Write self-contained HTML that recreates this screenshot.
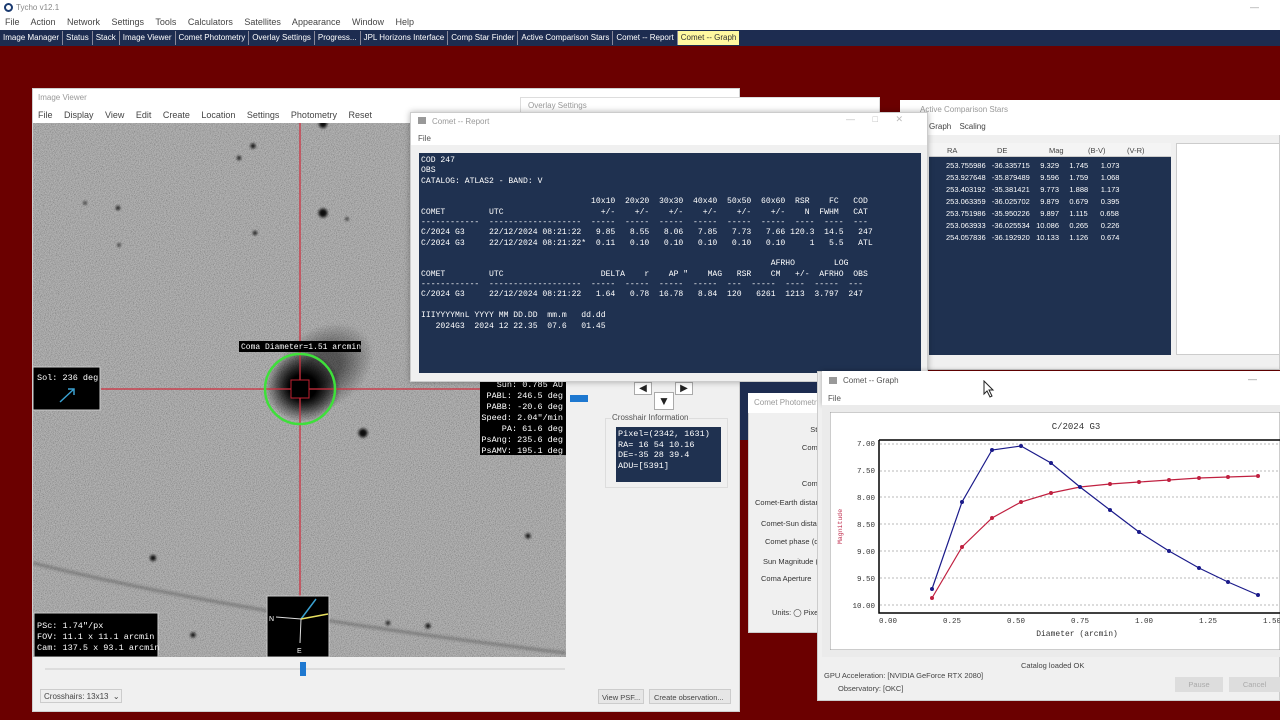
<!DOCTYPE html>
<html><head><meta charset="utf-8"><style>
*{margin:0;padding:0;box-sizing:border-box}
body{width:1280px;height:720px;overflow:hidden;background:#6b0000;font-family:"Liberation Sans",sans-serif;font-size:9px;color:#222;position:relative}
.a{position:absolute}
.mono{font-family:"Liberation Mono",monospace}
pre{font-family:"Liberation Mono",monospace;white-space:pre}
.btn{white-space:nowrap}
</style></head><body>
<!-- top bars -->
<div class="a" style="left:0;top:0;width:1280px;height:30px;background:#fff"></div>
<div class="a" style="left:4px;top:3px;width:9px;height:9px;border:2px solid #1a3a70;border-radius:50%"></div>
<div class="a" style="left:16px;top:3px;color:#888;font-size:8px">Tycho v12.1</div>
<div class="a" style="left:1250px;top:2px;color:#999;font-size:9px">—</div>
<div class="a" style="left:5px;top:17px;font-size:9px;color:#444;word-spacing:9px">File Action Network Settings Tools Calculators Satellites Appearance Window Help</div>
<div class="a" style="left:0;top:30px;width:1280px;height:16px;background:#1d2c50"></div>
<div class="a" style="left:0;top:31px;height:14px;display:flex;font-size:8px;color:#fff;line-height:14px;white-space:nowrap">
<span style="padding:0 3px;border-right:1px solid #889">Image Manager</span><span style="padding:0 3px;border-right:1px solid #889">Status</span><span style="padding:0 3px;border-right:1px solid #889">Stack</span><span style="padding:0 3px;border-right:1px solid #889">Image Viewer</span><span style="padding:0 3px;border-right:1px solid #889">Comet Photometry</span><span style="padding:0 3px;border-right:1px solid #889">Overlay Settings</span><span style="padding:0 3px;border-right:1px solid #889">Progress...</span><span style="padding:0 3px;border-right:1px solid #889">JPL Horizons Interface</span><span style="padding:0 3px;border-right:1px solid #889">Comp Star Finder</span><span style="padding:0 3px;border-right:1px solid #889">Active Comparison Stars</span><span style="padding:0 3px;border-right:1px solid #889">Comet -- Report</span><span style="padding:0 3px;background:#fff9a0;color:#333">Comet -- Graph</span></div>

<!-- Image viewer window -->
<div class="a" style="left:32px;top:88px;width:708px;height:624px;background:#f0f0f0;border:1px solid #cfcfcf"></div>
<div class="a" style="left:33px;top:89px;width:706px;height:34px;background:#fff"></div>
<div class="a" style="left:38px;top:93px;color:#999;font-size:8px">Image Viewer</div>
<div class="a" style="left:38px;top:110px;color:#444;font-size:9px;word-spacing:9px">File Display View Edit Create Location Settings Photometry Reset</div>
<svg class="a" style="left:33px;top:123px" width="533" height="534">
<defs><filter id="n" x="0" y="0" width="100%" height="100%"><feTurbulence type="fractalNoise" baseFrequency="1.2" numOctaves="1" seed="3"/><feColorMatrix values="1.6 0 0 0 -0.3  1.6 0 0 0 -0.3  1.6 0 0 0 -0.3  0 0 0 0 1"/></filter>
<filter id="b"><feGaussianBlur stdDeviation="1.2"/></filter>
<radialGradient id="cg"><stop offset="0.35" stop-color="#000"/><stop offset="1" stop-color="#000" stop-opacity="0"/></radialGradient></defs>
<rect width="533" height="534" fill="#9c9c9c"/>
<rect width="533" height="534" filter="url(#n)" opacity="0.35"/>
<path d="M0 440 Q200 490 533 530" stroke="#555" stroke-width="3" fill="none" opacity="0.5" filter="url(#b)"/>
<g fill="#111" filter="url(#b)"><circle cx="290" cy="90" r="4.5"/><circle cx="330" cy="310" r="4.5"/><circle cx="120" cy="435" r="3"/><circle cx="155" cy="574" r="3"/><circle cx="154" cy="545" r="2.5"/><circle cx="395" cy="503" r="2.5"/><circle cx="220" cy="23" r="2.5"/><circle cx="206" cy="35" r="2"/><circle cx="222" cy="110" r="2"/><circle cx="85" cy="85" r="2"/><circle cx="290" cy="1" r="4"/><circle cx="495" cy="413" r="2.5"/><circle cx="160" cy="512" r="2.5"/><circle cx="355" cy="500" r="2"/><circle cx="52" cy="80" r="1.5"/><circle cx="86" cy="122" r="1.5"/><circle cx="314" cy="96" r="1.5"/></g>
<ellipse cx="290" cy="245" rx="55" ry="40" fill="url(#cg)" opacity="0.5" transform="rotate(-35 290 245)"/>
<ellipse cx="270" cy="264" rx="38" ry="35" fill="url(#cg)"/>
<line x1="267" y1="0" x2="267" y2="534" stroke="#d03040" stroke-width="1.5" opacity="0.85"/>
<line x1="68" y1="266" x2="533" y2="266" stroke="#d03040" stroke-width="1.5" opacity="0.85"/>
<rect x="258" y="257" width="18" height="18" fill="#000" stroke="#c02030"/>
<circle cx="267" cy="266" r="35" fill="none" stroke="#3ee03a" stroke-width="2.5"/>
<rect x="206" y="218" width="122" height="11" fill="#000"/>
<text x="208" y="226" fill="#fff" font-family="Liberation Mono" font-size="8">Coma Diameter=1.51 arcmin</text>
<rect x="0" y="244" width="67" height="43" fill="#000" stroke="#ccc"/>
<text x="4" y="257" fill="#fff" font-family="Liberation Mono" font-size="8.5">Sol: 236 deg</text>
<line x1="27" y1="279" x2="41" y2="266" stroke="#3aa0d0" stroke-width="1.5"/><path d="M35 266 L41 266 L41 272" stroke="#3aa0d0" fill="none" stroke-width="1.5"/>
<rect x="447" y="257" width="86" height="75" fill="#000"/>
<text font-family="Liberation Mono" font-size="8.5" fill="#fff" text-anchor="end"><tspan x="530" y="264">Sun: 0.785 AU</tspan><tspan x="530" y="275">PABL: 246.5 deg</tspan><tspan x="530" y="286">PABB: -20.6 deg</tspan><tspan x="530" y="297">Speed: 2.04"/min</tspan><tspan x="530" y="308">PA: 61.6 deg</tspan><tspan x="530" y="319">PsAng: 235.6 deg</tspan><tspan x="530" y="330">PsAMV: 195.1 deg</tspan></text>
<rect x="1" y="490" width="124" height="44" fill="#000" stroke="#ccc"/>
<text font-family="Liberation Mono" font-size="8.5" fill="#fff"><tspan x="4" y="505">PSc: 1.74"/px</tspan><tspan x="4" y="516">FOV: 11.1 x 11.1 arcmin</tspan><tspan x="4" y="527">Cam: 137.5 x 93.1 arcmin</tspan></text>
<rect x="234" y="473" width="62" height="61" fill="#000" stroke="#ccc"/>
<line x1="268" y1="496" x2="283" y2="476" stroke="#3aa0d0" stroke-width="1.5"/>
<line x1="268" y1="496" x2="295" y2="491" stroke="#e8e060" stroke-width="1.5"/>
<line x1="268" y1="496" x2="243" y2="494" stroke="#ddd" stroke-width="1"/>
<line x1="268" y1="496" x2="267" y2="520" stroke="#ddd" stroke-width="1"/>
<text x="236" y="498" fill="#fff" font-size="7" font-family="Liberation Sans">N</text>
<text x="264" y="530" fill="#fff" font-size="7" font-family="Liberation Sans">E</text>
</svg>
<div class="a" style="left:45px;top:668px;width:520px;height:2px;background:#ddd"></div>
<div class="a" style="left:300px;top:662px;width:6px;height:14px;background:#1e78d0"></div>
<div class="a btn" style="left:40px;top:689px;width:82px;height:14px;border:1px solid #ccc;background:#eee;font-size:8px;color:#444;padding:2px 3px">Crosshairs: 13x13 &nbsp;⌄</div>
<div class="a btn" style="left:598px;top:689px;width:46px;height:15px;border:1px solid #ccc;background:#e6e6e6;font-size:7.5px;color:#444;padding:3px 3px">View PSF...</div>
<div class="a btn" style="left:649px;top:689px;width:82px;height:15px;border:1px solid #ccc;background:#e6e6e6;font-size:7.5px;color:#444;padding:3px 4px">Create observation...</div>

<!-- crosshair panel area -->
<div class="a" style="left:570px;top:395px;width:18px;height:7px;background:#1e78d0"></div>
<div class="a" style="left:634px;top:382px;width:18px;height:13px;background:#fff;border:1px solid #aaa;text-align:center;font-size:10px;line-height:11px">◀</div>
<div class="a" style="left:675px;top:382px;width:18px;height:13px;background:#fff;border:1px solid #aaa;text-align:center;font-size:10px;line-height:11px">▶</div>
<div class="a" style="left:654px;top:392px;width:20px;height:18px;background:#fff;border:1px solid #aaa;text-align:center;font-size:12px;line-height:16px">▼</div>
<div class="a" style="left:605px;top:418px;width:123px;height:70px;border:1px solid #ddd"></div>
<div class="a" style="left:611px;top:413px;font-size:8px;color:#555;background:#f0f0f0;padding:0 1px">Crosshair Information</div>
<div class="a mono" style="left:616px;top:427px;width:105px;height:55px;background:#1f3150;color:#fff;font-size:8.5px;line-height:10.5px;padding:2px 2px;white-space:pre">Pixel=(2342, 1631)
RA= 16 54 10.16
DE=-35 28 39.4
ADU=[5391]</div>

<!-- Overlay settings (behind) -->
<div class="a" style="left:520px;top:97px;width:360px;height:18px;background:#fff;border:1px solid #ddd"></div>
<div class="a" style="left:528px;top:101px;color:#999;font-size:8px">Overlay Settings</div>

<!-- Active comparison stars -->
<div class="a" style="left:900px;top:100px;width:380px;height:270px;background:#f0f0f0;border:1px solid #ccc"></div>
<div class="a" style="left:900px;top:100px;width:380px;height:35px;background:#fff"></div>
<div class="a" style="left:920px;top:105px;color:#999;font-size:8px">Active Comparison Stars</div>
<div class="a" style="left:929px;top:122px;color:#444;font-size:8px;word-spacing:6px">Graph Scaling</div>
<div class="a" style="left:929px;top:143px;width:242px;height:212px;background:#1f3150"></div>
<div class="a" style="left:929px;top:143px;width:242px;height:14px;background:#f4f4f4;border-bottom:1px solid #ccc;font-size:7.5px;color:#444"><span class="a" style="left:18px;top:3px">RA</span><span class="a" style="left:68px;top:3px">DE</span><span class="a" style="left:120px;top:3px">Mag</span><span class="a" style="left:159px;top:3px">(B-V)</span><span class="a" style="left:198px;top:3px">(V-R)</span></div>
<pre class="a" style="left:946px;top:160px;color:#fff;font-family:'Liberation Sans',sans-serif;font-size:7.5px;line-height:12px">253.755986   -36.335715     9.329     1.745      1.073
253.927648   -35.879489     9.596     1.759      1.068
253.403192   -35.381421     9.773     1.888      1.173
253.063359   -36.025702     9.879     0.679      0.395
253.751986   -35.950226     9.897     1.115      0.658
253.063933   -36.025534   10.086     0.265      0.226
254.057836   -36.192920   10.133     1.126      0.674</pre>
<div class="a" style="left:1176px;top:143px;width:104px;height:212px;background:#fff;border:1px solid #ccc"></div>

<!-- Comet report -->
<div class="a" style="left:410px;top:112px;width:518px;height:270px;background:#f0f0f0;border:1px solid #ccc;box-shadow:0 0 6px rgba(0,0,0,.3)"></div>
<div class="a" style="left:411px;top:113px;width:516px;height:32px;background:#fff"></div>
<div class="a" style="left:418px;top:117px;width:8px;height:7px;background:#999"></div>
<div class="a" style="left:432px;top:117px;color:#999;font-size:8px">Comet -- Report</div>
<div class="a" style="left:846px;top:114px;color:#bbb;font-size:9px">—&nbsp;&nbsp;&nbsp;&nbsp;&nbsp;&nbsp;&nbsp;□&nbsp;&nbsp;&nbsp;&nbsp;&nbsp;&nbsp;&nbsp;✕</div>
<div class="a" style="left:418px;top:134px;color:#555;font-size:8px">File</div>
<div class="a" style="left:419px;top:153px;width:502px;height:220px;background:#1f3150"></div>
<pre class="a" style="left:421px;top:156px;color:#fff;font-size:8.1px;line-height:10.35px">COD 247
OBS
CATALOG: ATLAS2 - BAND: V

                                   10x10  20x20  30x30  40x40  50x50  60x60  RSR    FC   COD
COMET         UTC                    +/-    +/-    +/-    +/-    +/-    +/-    N  FWHM   CAT
------------  -------------------  -----  -----  -----  -----  -----  -----  ----  ----  ---
C/2024 G3     22/12/2024 08:21:22   9.85   8.55   8.06   7.85   7.73   7.66 120.3  14.5   247
C/2024 G3     22/12/2024 08:21:22*  0.11   0.10   0.10   0.10   0.10   0.10     1   5.5   ATL

                                                                        AFRHO        LOG
COMET         UTC                    DELTA    r    AP "    MAG   RSR    CM   +/-  AFRHO  OBS
------------  -------------------  -----  -----  -----  -----  ---  -----  ----  -----  ---
C/2024 G3     22/12/2024 08:21:22   1.64   0.78  16.78   8.84  120   6261  1213  3.797  247

IIIYYYYMnL YYYY MM DD.DD  mm.m   dd.dd
   2024G3  2024 12 22.35  07.6   01.45</pre>

<!-- dark region behind photometry -->
<div class="a" style="left:740px;top:382px;width:85px;height:58px;background:#1d2c50"></div>
<!-- Comet photometry -->
<div class="a" style="left:748px;top:393px;width:78px;height:240px;background:#f0f0f0;border:1px solid #ccc"></div>
<div class="a" style="left:748px;top:393px;width:78px;height:20px;background:#fff"></div>
<div class="a" style="left:754px;top:398px;color:#999;font-size:8px;white-space:nowrap;overflow:hidden;width:72px">Comet Photometry</div>
<div class="a" style="left:749px;top:420px;width:75px;height:205px;font-size:7.5px;color:#333;white-space:nowrap;overflow:hidden">
<div class="a" style="right:0;top:5px">Star</div><div class="a" style="right:0;top:23px">Comet</div><div class="a" style="right:0;top:59px">Comet</div><div class="a" style="left:6px;top:78px">Comet-Earth distance</div><div class="a" style="left:12px;top:99px">Comet-Sun distance</div><div class="a" style="left:16px;top:117px">Comet phase (deg)</div><div class="a" style="left:14px;top:137px">Sun Magnitude (R)</div><div class="a" style="left:12px;top:154px">Coma Aperture</div><div class="a" style="left:23px;top:188px">Units: ◯ Pixels</div></div>

<!-- Comet graph -->
<div class="a" style="left:817px;top:371px;width:463px;height:330px;background:#f0f0f0;border:1px solid #ccc"></div>
<div class="a" style="left:822px;top:371px;width:458px;height:34px;background:#fff;box-shadow:0 0 5px rgba(0,0,0,.3)"></div>
<div class="a" style="left:829px;top:377px;width:8px;height:7px;background:#999"></div>
<div class="a" style="left:843px;top:376px;color:#555;font-size:8px">Comet -- Graph</div>
<div class="a" style="left:1248px;top:374px;color:#888;font-size:9px">—</div>
<div class="a" style="left:828px;top:394px;color:#555;font-size:8px">File</div>
<div class="a" style="left:822px;top:405px;width:458px;height:252px;background:#ebebeb"></div>
<svg class="a" style="left:830px;top:412px" width="450" height="238">
<rect width="450" height="238" fill="#fff" stroke="#999"/>
<text x="246" y="17" text-anchor="middle" font-family="Liberation Mono" font-size="9" fill="#333">C/2024 G3</text>
<g stroke="#777" stroke-dasharray="2,2" stroke-width="0.6"><line x1="50" y1="32" x2="450" y2="32"/><line x1="50" y1="59" x2="450" y2="59"/><line x1="50" y1="85" x2="450" y2="85"/><line x1="50" y1="112" x2="450" y2="112"/><line x1="50" y1="139" x2="450" y2="139"/><line x1="50" y1="166" x2="450" y2="166"/><line x1="50" y1="193" x2="450" y2="193"/></g>
<path d="M49 28 L450 28 M49 28 L49 201 L450 201" stroke="#000" stroke-width="1.5" fill="none"/>
<g font-family="Liberation Mono" font-size="7.5" fill="#333" text-anchor="end"><text x="45" y="34">7.00</text><text x="45" y="61">7.50</text><text x="45" y="88">8.00</text><text x="45" y="115">8.50</text><text x="45" y="142">9.00</text><text x="45" y="169">9.50</text><text x="45" y="196">10.00</text></g>
<g font-family="Liberation Mono" font-size="7.5" fill="#333" text-anchor="middle"><text x="58" y="211">0.00</text><text x="122" y="211">0.25</text><text x="186" y="211">0.50</text><text x="250" y="211">0.75</text><text x="314" y="211">1.00</text><text x="378" y="211">1.25</text><text x="442" y="211">1.50</text></g>
<text x="247" y="224" text-anchor="middle" font-family="Liberation Mono" font-size="8" fill="#333">Diameter (arcmin)</text>
<text transform="translate(12,132) rotate(-90)" font-family="Liberation Mono" font-size="6.5" fill="#c03050">Magnitude</text>
<g transform="translate(-830,-412)">
<polyline points="932,589 962,502 992,450 1021,446 1051,463 1080,487 1110,510 1139,532 1169,551 1199,568 1228,582 1258,595" fill="none" stroke="#1a1a8a" stroke-width="1.2"/>
<polyline points="932,598 962,547 992,518 1021,502 1051,493 1080,487 1110,484 1139,482 1169,480 1199,478 1228,477 1258,476" fill="none" stroke="#c02040" stroke-width="1.2"/>
<g fill="#1a1a8a"><circle cx="932" cy="589" r="2"/><circle cx="962" cy="502" r="2"/><circle cx="992" cy="450" r="2"/><circle cx="1021" cy="446" r="2"/><circle cx="1051" cy="463" r="2"/><circle cx="1080" cy="487" r="2"/><circle cx="1110" cy="510" r="2"/><circle cx="1139" cy="532" r="2"/><circle cx="1169" cy="551" r="2"/><circle cx="1199" cy="568" r="2"/><circle cx="1228" cy="582" r="2"/><circle cx="1258" cy="595" r="2"/></g>
<g fill="#c02040"><circle cx="932" cy="598" r="2"/><circle cx="962" cy="547" r="2"/><circle cx="992" cy="518" r="2"/><circle cx="1021" cy="502" r="2"/><circle cx="1051" cy="493" r="2"/><circle cx="1110" cy="484" r="2"/><circle cx="1139" cy="482" r="2"/><circle cx="1169" cy="480" r="2"/><circle cx="1199" cy="478" r="2"/><circle cx="1228" cy="477" r="2"/><circle cx="1258" cy="476" r="2"/></g>
</g>
</svg>
<svg class="a" style="left:983px;top:380px" width="12" height="18"><path d="M1 1 L1 14 L4 11 L7 17 L9 16 L6 10 L10 10 Z" fill="#fff" stroke="#222" stroke-width="1"/></svg>
<div class="a" style="left:1021px;top:661px;color:#444;font-size:7.5px">Catalog loaded OK</div>
<div class="a" style="left:824px;top:671px;color:#444;font-size:7.5px">GPU Acceleration: [NVIDIA GeForce RTX 2080]</div>
<div class="a" style="left:838px;top:684px;color:#444;font-size:7.5px">Observatory: [OKC]</div>
<div class="a" style="left:1175px;top:677px;width:48px;height:15px;background:#ddd;color:#aaa;font-size:7.5px;text-align:center;line-height:15px">Pause</div>
<div class="a" style="left:1229px;top:677px;width:51px;height:15px;background:#ddd;color:#aaa;font-size:7.5px;text-align:center;line-height:15px">Cancel</div>
</body></html>
